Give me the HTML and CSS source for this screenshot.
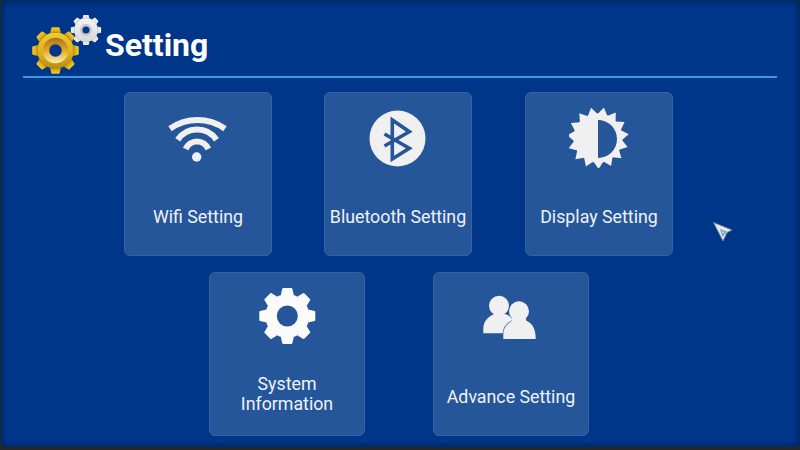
FILE: index.html
```html
<!DOCTYPE html>
<html lang="en">
  <head>
    <meta charset="UTF-8" />
    <title>Setting</title>
    <link rel="stylesheet" href="styles.css">
  </head>
  <body>
    <svg class="defs" width="0" height="0">
      <defs>
        <linearGradient id="goldBody" x1="0" y1="0" x2="0" y2="1">
          <stop offset="0" stop-color="#f0cc2a" />
          <stop offset="0.55" stop-color="#e0b31c" />
          <stop offset="1" stop-color="#b98a12" />
        </linearGradient>
        <linearGradient id="goldRing" x1="0" y1="0" x2="0" y2="1">
          <stop offset="0" stop-color="#a8701a" />
          <stop offset="0.5" stop-color="#e2a92a" />
          <stop offset="1" stop-color="#fbf0b0" />
        </linearGradient>
        <linearGradient id="silverBody" x1="0" y1="0" x2="0" y2="1">
          <stop offset="0" stop-color="#f6f6f6" />
          <stop offset="1" stop-color="#d6d6d6" />
        </linearGradient>
        <path id="tooth" d="M-6.5,-21 L-5,-27.2 Q-5,-28 -4,-28 L4,-28 Q5,-28 5,-27.2 L6.5,-21 Z" />
        <g id="gearShape">
          <circle r="22" />
          <use href="#tooth" />
          <use href="#tooth" transform="rotate(45)" />
          <use href="#tooth" transform="rotate(90)" />
          <use href="#tooth" transform="rotate(135)" />
          <use href="#tooth" transform="rotate(180)" />
          <use href="#tooth" transform="rotate(225)" />
          <use href="#tooth" transform="rotate(270)" />
          <use href="#tooth" transform="rotate(315)" />
        </g>
        <polygon id="ray" points="-5,-23.5 0,-31 5,-23.5" />
      </defs>
    </svg>

    <div class="screen">
      <header class="top-bar">
        <svg class="logo" width="75" height="62" viewBox="0 0 75 62">
          <g transform="translate(25.5 38.5) scale(0.83)" fill="url(#goldBody)">
            <use href="#gearShape" />
            <circle r="15.5" fill="url(#goldRing)" />
            <circle r="7.5" fill="#00368a" />
          </g>
          <g transform="translate(56 18) scale(0.54)" fill="url(#silverBody)">
            <use href="#gearShape" />
            <circle r="11" fill="#c6c6c6" />
            <circle r="6.5" fill="#00368a" />
          </g>
        </svg>
        <h1 class="title">Setting</h1>
      </header>

      <main class="menu">
        <div class="row row-top">
          <div class="tile">
            <svg class="icon" width="60" height="60" viewBox="0 0 60 60">
              <g fill="none" stroke="#f0f0f0" stroke-width="6">
                <path d="M2,20.7 A48 48 0 0 1 57,20.7" />
                <path d="M9.7,31.7 A23.5 23.5 0 0 1 48.5,31.7" />
                <path d="M17.7,41 A12.2 12.2 0 0 1 40.3,41" />
              </g>
              <circle cx="28.7" cy="49" r="4.7" fill="#f0f0f0" />
            </svg>
            <div class="tile-label">Wifi Setting</div>
          </div>
          <div class="tile">
            <svg class="icon" width="60" height="60" viewBox="0 0 60 60">
              <circle cx="29.5" cy="30.5" r="28" fill="#f0f0f0" />
              <polyline points="16.5,26 41.3,40.3 24.3,51 24.3,12 41.3,23.7 16.5,38" fill="none" stroke="#26569a" stroke-width="3.6" />
            </svg>
            <div class="tile-label">Bluetooth Setting</div>
          </div>
          <div class="tile">
            <svg class="icon" width="60" height="60" viewBox="0 0 60 60">
              <g transform="translate(29 30)" fill="#f0f0f0">
                <circle r="24.5" />
                <use href="#ray" transform="rotate(-13)" />
                <use href="#ray" transform="rotate(11)" />
                <use href="#ray" transform="rotate(35)" />
                <use href="#ray" transform="rotate(59)" />
                <use href="#ray" transform="rotate(83)" />
                <use href="#ray" transform="rotate(107)" />
                <use href="#ray" transform="rotate(131)" />
                <use href="#ray" transform="rotate(155)" />
                <use href="#ray" transform="rotate(179)" />
                <use href="#ray" transform="rotate(203)" />
                <use href="#ray" transform="rotate(227)" />
                <use href="#ray" transform="rotate(251)" />
                <use href="#ray" transform="rotate(275)" />
                <use href="#ray" transform="rotate(299)" />
                <use href="#ray" transform="rotate(323)" />
              </g>
              <path d="M29,12 A19 19 0 0 1 29,50 Z" fill="#26569a" />
            </svg>
            <div class="tile-label">Display Setting</div>
          </div>
        </div>

        <div class="row row-bottom">
          <div class="tile tile-wide">
            <svg class="icon" width="60" height="60" viewBox="0 0 60 60">
              <g transform="translate(30.3 28)" fill="#fbfbfb">
                <use href="#gearShape" />
                <circle r="10.5" fill="#26569a" />
              </g>
            </svg>
            <div class="tile-label tile-label-two">System<br />Information</div>
          </div>
          <div class="tile tile-wide">
            <svg class="icon" width="60" height="60" viewBox="0 0 60 60">
              <g fill="#f0f0f0">
                <circle cx="18" cy="17.7" r="10" />
                <path d="M2.3,45.3 V41 C2.3,33 7,29 13,26 L24,26 C30,28 36,32 36,45.3 Z" />
                <path d="M22.3,51 V46 C22.3,39 27,35 32.5,32 L43.5,32 C50,34 54.7,39 54.7,51 Z" stroke="#26569a" stroke-width="1.4" paint-order="stroke" />
                <circle cx="38" cy="23.3" r="10" stroke="#26569a" stroke-width="1" paint-order="stroke" />
                <path d="M31,31 L45,31 L46,36 L30,36 Z" />
              </g>
            </svg>
            <div class="tile-label">Advance Setting</div>
          </div>
        </div>
      </main>

      <svg class="pointer" width="22" height="22" viewBox="0 0 22 22">
        <path d="M1.5,1.5 L20,9 L15,11.5 L11,20 Z" fill="#e8ebee" stroke="#7d858e" stroke-width="1" />
        <path d="M8,8 L15,10.5 L10.5,16 Z" fill="#6f9fc6" />
        <path d="M10,10 L12.5,11 L10.8,13 Z" fill="#dfe6ec" />
      </svg>
    </div>
  </body>
</html>
```

FILE: styles.css
```css
html,
body {
  margin: 0;
  height: 100%;
}
body {
  background-color: #23282e;
  font-family: Roboto, "Liberation Sans", sans-serif;
  overflow: hidden;
}
.defs {
  display: block;
  height: 0;
}
.screen {
  position: relative;
  box-sizing: border-box;
  width: 799px;
  height: 447px;
  margin-left: 1px;
  background-color: #00368a;
  border-radius: 5px;
  box-shadow: inset 0 0 6px 1px #00214f;
}
.top-bar {
  display: flex;
  align-items: center;
  box-sizing: border-box;
  height: 78px;
  margin: 0 23px 0 22px;
  padding: 12px 0 2px 7px;
  border-bottom: 2px solid #3a9ae0;
}
.title {
  margin: 4px 0 0;
  color: #fff;
  font-size: 32px;
  font-weight: 700;
}
.menu {
  display: flex;
  flex-direction: column;
  gap: 16px;
  margin-top: 14px;
}
.row {
  display: flex;
  justify-content: center;
}
.row-top {
  gap: 52px;
  padding-right: 4px;
}
.row-top .tile:last-child {
  margin-left: 1px;
}
.row-bottom {
  gap: 68px;
  padding-right: 3px;
}
.tile {
  display: flex;
  flex-direction: column;
  align-items: center;
  box-sizing: border-box;
  width: 148px;
  height: 164px;
  padding-top: 15px;
  background-color: #26569a;
  border: 1px solid #34639f;
  border-radius: 6px;
}
.tile-wide {
  width: 156px;
}
.icon {
  display: block;
  flex: none;
}
.tile-label {
  display: flex;
  flex: 1;
  align-items: center;
  margin-top: 10px;
  color: #eef2f7;
  font-size: 17.8px;
  line-height: 20px;
  text-align: center;
}
.tile-label-two {
  padding-bottom: 6px;
}
.pointer {
  position: absolute;
  left: 711px;
  top: 221px;
}
```
